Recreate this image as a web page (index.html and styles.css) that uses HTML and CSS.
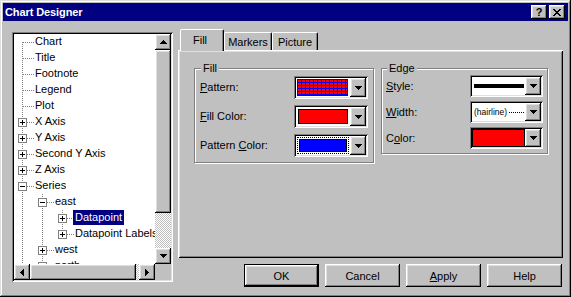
FILE: index.html
```html
<!DOCTYPE html>
<html>
<head>
<meta charset="utf-8">
<link rel="stylesheet" href="styles.css">
</head>
<body>
<div class="window">
  <div class="titlebar">
    <span class="title">Chart Designer</span>
    <span class="tbtn raised"><span class="qmark">?</span></span>
    <span class="tbtn raised">
      <svg width="8" height="7" viewBox="0 0 8 7"><path d="M0 0h2v1H0z M6 0h2v1H6z M1 1h2v1H1z M5 1h2v1H5z M2 2h4v1H2z M3 3h2v1H3z M2 4h4v1H2z M1 5h2v1H1z M5 5h2v1H5z M0 6h2v1H0z M6 6h2v1H6z" fill="#000"/></svg>
    </span>
  </div>
  <div class="body">
    <div class="tree">
      <div class="tree-view">
        <div class="row"><span class="cell first"></span><span class="label">Chart</span></div>
        <div class="row"><span class="cell tee"></span><span class="label">Title</span></div>
        <div class="row"><span class="cell tee"></span><span class="label">Footnote</span></div>
        <div class="row"><span class="cell tee"></span><span class="label">Legend</span></div>
        <div class="row"><span class="cell tee"></span><span class="label">Plot</span></div>
        <div class="row"><span class="cell tee"><span class="box plus"></span></span><span class="label">X Axis</span></div>
        <div class="row"><span class="cell tee"><span class="box plus"></span></span><span class="label">Y Axis</span></div>
        <div class="row"><span class="cell tee"><span class="box plus"></span></span><span class="label">Second Y Axis</span></div>
        <div class="row"><span class="cell tee"><span class="box plus"></span></span><span class="label">Z Axis</span></div>
        <div class="row"><span class="cell tee"><span class="box minus"></span></span><span class="label">Series</span></div>
        <div class="row"><span class="cell line"></span><span class="cell tee"><span class="box minus"></span></span><span class="label">east</span></div>
        <div class="row"><span class="cell line"></span><span class="cell line"></span><span class="cell tee"><span class="box plus"></span></span><span class="label sel">Datapoint</span></div>
        <div class="row"><span class="cell line"></span><span class="cell line"></span><span class="cell elbow"><span class="box plus"></span></span><span class="label">Datapoint Labels</span></div>
        <div class="row"><span class="cell line"></span><span class="cell tee"><span class="box plus"></span></span><span class="label">west</span></div>
        <div class="row"><span class="cell line"></span><span class="cell tee"><span class="box plus"></span></span><span class="label">north</span></div>
      </div>
      <div class="vscroll">
        <span class="sbtn raised"><svg width="7" height="4" viewBox="0 0 7 4"><path d="M3 0h1v1H3z M2 1h3v1H2z M1 2h5v1H1z M0 3h7v1H0z"/></svg></span>
        <span class="vthumb raised"></span>
        <span class="track"></span>
        <span class="sbtn raised"><svg width="7" height="4" viewBox="0 0 7 4"><path d="M0 0h7v1H0z M1 1h5v1H1z M2 2h3v1H2z M3 3h1v1H3z"/></svg></span>
      </div>
      <div class="hscroll">
        <span class="sbtn raised"><svg width="4" height="7" viewBox="0 0 4 7"><path d="M0 3h1v1H0z M1 2h1v3H1z M2 1h1v5H2z M3 0h1v7H3z"/></svg></span>
        <span class="hthumb raised"></span>
        <span class="track"></span>
        <span class="sbtn raised"><svg width="4" height="7" viewBox="0 0 4 7"><path d="M0 0h1v7H0z M1 1h1v5H1z M2 2h1v3H2z M3 3h1v1H3z"/></svg></span>
      </div>
      <div class="corner"></div>
    </div>

    <div class="right">
      <div class="tabs">
        <span class="tab active">Fill</span>
        <span class="tab t-markers">Markers</span>
        <span class="tab t-picture">Picture</span>
      </div>
      <div class="panel">
        <div class="group g-fill">
          <div class="legend">Fill</div>
          <div class="frow">
            <span class="flabel"><u>P</u>attern:</span>
            <span class="combo">
              <span class="field"><span class="swatch pattern"></span></span>
              <span class="drop raised"><svg width="7" height="4" viewBox="0 0 7 4"><path d="M0 0h7v1H0z M1 1h5v1H1z M2 2h3v1H2z M3 3h1v1H3z"/></svg></span>
            </span>
          </div>
          <div class="frow">
            <span class="flabel"><u>F</u>ill Color:</span>
            <span class="combo">
              <span class="field"><span class="swatch red"></span></span>
              <span class="drop raised"><svg width="7" height="4" viewBox="0 0 7 4"><path d="M0 0h7v1H0z M1 1h5v1H1z M2 2h3v1H2z M3 3h1v1H3z"/></svg></span>
            </span>
          </div>
          <div class="frow">
            <span class="flabel">Pattern <u>C</u>olor:</span>
            <span class="combo">
              <span class="field"><span class="focus"><span class="swatch blue"></span></span></span>
              <span class="drop raised"><svg width="7" height="4" viewBox="0 0 7 4"><path d="M0 0h7v1H0z M1 1h5v1H1z M2 2h3v1H2z M3 3h1v1H3z"/></svg></span>
            </span>
          </div>
        </div>
        <div class="group g-edge">
          <div class="legend">Edge</div>
          <div class="erow">
            <span class="flabel"><u>S</u>tyle:</span>
            <span class="combo ecombo">
              <span class="field style-field"><span class="thick"></span></span>
              <span class="drop raised"><svg width="7" height="4" viewBox="0 0 7 4"><path d="M0 0h7v1H0z M1 1h5v1H1z M2 2h3v1H2z M3 3h1v1H3z"/></svg></span>
            </span>
          </div>
          <div class="erow">
            <span class="flabel"><u>W</u>idth:</span>
            <span class="combo ecombo">
              <span class="field width-field"><span class="hair">(hairline)</span><span class="dots"></span></span>
              <span class="drop raised"><svg width="7" height="4" viewBox="0 0 7 4"><path d="M0 0h7v1H0z M1 1h5v1H1z M2 2h3v1H2z M3 3h1v1H3z"/></svg></span>
            </span>
          </div>
          <div class="erow">
            <span class="flabel">C<u>o</u>lor:</span>
            <span class="combo ecombo">
              <span class="field color-field"><span class="swatch red full"></span></span>
              <span class="drop raised"><svg width="7" height="4" viewBox="0 0 7 4"><path d="M0 0h7v1H0z M1 1h5v1H1z M2 2h3v1H2z M3 3h1v1H3z"/></svg></span>
            </span>
          </div>
        </div>
      </div>
      <div class="buttons">
        <span class="btn default">OK</span>
        <span class="btn raised">Cancel</span>
        <span class="btn raised"><u>A</u>pply</span>
        <span class="btn raised">Help</span>
      </div>
    </div>
  </div>
</div>
</body>
</html>
```

FILE: styles.css
```css
* { box-sizing: border-box; }
html, body { margin: 0; padding: 0; }
body {
  width: 571px;
  height: 297px;
  overflow: hidden;
  background: #c0c0c0;
  font-family: "Liberation Sans", Arial, sans-serif;
  font-size: 11px;
  color: #000;
}
u { text-decoration: underline; text-underline-offset: 1px; }

.raised {
  background: #c0c0c0;
  box-shadow: inset -1px -1px #000, inset 1px 1px #fff, inset -2px -2px #808080, inset 2px 2px #dfdfdf;
}

.window {
  width: 571px;
  height: 297px;
  padding: 3px;
  background: #c0c0c0;
  box-shadow: inset -1px -1px #000, inset 1px 1px #dfdfdf, inset -2px -2px #808080, inset 2px 2px #fff;
  display: flex;
  flex-direction: column;
}

/* title bar */
.titlebar {
  height: 18px;
  flex: none;
  background: #000080;
  display: flex;
  align-items: center;
  padding: 0 3px 0 2px;
}
.title {
  flex: 1;
  color: #fff;
  font-weight: bold;
  font-size: 11px;
  letter-spacing: -0.1px;
}
.tbtn {
  width: 16px;
  height: 14px;
  display: flex;
  align-items: center;
  justify-content: center;
}
.tbtn + .tbtn { margin-left: 2px; }
.qmark { font-weight: bold; font-size: 11px; line-height: 11px; margin-top: 0; }

/* body */
.body {
  flex: 1;
  display: flex;
  align-items: flex-start;
  padding: 8px 0 0 9px;
}

/* tree */
.tree {
  width: 161px;
  height: 250px;
  margin-top: 3px;
  padding: 2px;
  background: #c0c0c0;
  box-shadow: inset 1px 1px #808080, inset -1px -1px #fff, inset 2px 2px #000, inset -2px -2px #dfdfdf;
  display: grid;
  grid-template-columns: 141px 16px;
  grid-template-rows: 230px 16px;
}
.tree-view {
  background: #fff;
  overflow: hidden;
  white-space: nowrap;
}
.row {
  height: 16px;
  display: flex;
  align-items: flex-start;
}
.cell {
  width: 20px;
  height: 16px;
  flex: none;
  display: flex;
  align-items: flex-start;
}
.cell.line {
  background: repeating-linear-gradient(#808080 0 1px, transparent 1px 2px) 8px 0 / 1px 16px no-repeat;
}
.cell.tee {
  background:
    repeating-linear-gradient(90deg, #808080 0 1px, transparent 1px 2px) 9px 8px / 11px 1px no-repeat,
    repeating-linear-gradient(#808080 0 1px, transparent 1px 2px) 8px 0 / 1px 16px no-repeat;
}
.cell.elbow {
  background:
    repeating-linear-gradient(90deg, #808080 0 1px, transparent 1px 2px) 9px 8px / 11px 1px no-repeat,
    repeating-linear-gradient(#808080 0 1px, transparent 1px 2px) 8px 0 / 1px 9px no-repeat;
}
.cell.first {
  background:
    repeating-linear-gradient(90deg, #808080 0 1px, transparent 1px 2px) 9px 8px / 11px 1px no-repeat,
    repeating-linear-gradient(#808080 0 1px, transparent 1px 2px) 8px 8px / 1px 8px no-repeat;
}
.box {
  width: 9px;
  height: 9px;
  margin: 4px 0 0 4px;
  border: 1px solid #808080;
}
.box.plus {
  background:
    linear-gradient(#000, #000) center / 5px 1px no-repeat,
    linear-gradient(#000, #000) center / 1px 5px no-repeat,
    #fff;
}
.box.minus {
  background:
    linear-gradient(#000, #000) center / 5px 1px no-repeat,
    #fff;
}
.label {
  margin-left: -1px;
  padding: 0 2px;
  height: 15px;
  line-height: 15px;
  font-size: 11px;
}
.label.sel {
  background: #000080;
  color: #fff;
}

.vscroll {
  display: flex;
  flex-direction: column;
}
.hscroll {
  display: flex;
}
.sbtn {
  width: 16px;
  height: 16px;
  flex: none;
  display: flex;
  align-items: center;
  justify-content: center;
}
.vthumb { height: 163px; flex: none; }
.hthumb { width: 106px; flex: none; }
.track {
  flex: 1;
  background: repeating-conic-gradient(#fff 0 25%, #c0c0c0 0 50%) 0 0 / 2px 2px;
}
.corner { background: #c0c0c0; }

/* right column */
.right {
  width: 385px;
  margin-left: 5px;
}
.tabs {
  height: 21px;
  display: flex;
  align-items: flex-end;
  padding-left: 2px;
}
.tab {
  height: 18px;
  display: flex;
  align-items: center;
  justify-content: center;
  border-top: 1px solid #fff;
  border-left: 1px solid #fff;
  border-right: 1px solid #000;
  border-radius: 2px 2px 0 0;
  box-shadow: inset -1px 0 #808080;
  background: #c0c0c0;
  padding-top: 1px;
}
.tab.active {
  width: 44px;
  height: 22px;
  margin-bottom: -1px;
  position: relative;
  z-index: 1;
  padding: 0 4px 1px 0;
}
.t-markers { width: 48px; }
.t-picture { width: 46px; }

.panel {
  height: 208px;
  padding: 18px 0 0 16px;
  display: flex;
  align-items: flex-start;
  background: #c0c0c0;
  box-shadow: inset 1px 1px #fff, inset -1px -1px #000, inset 2px 2px #dfdfdf, inset -2px -2px #808080;
}

.group {
  border: 1px solid #808080;
  box-shadow: inset 1px 1px #fff, 1px 1px #fff;
  display: flex;
  flex-direction: column;
}
.legend {
  margin: -7px 0 0 1px;
  padding: 0 2px;
  width: fit-content;
  height: 13px;
  line-height: 13px;
  background: #c0c0c0;
}
.g-fill {
  width: 180px;
  height: 95px;
  padding: 0 5px 5px 5px;
}
.g-edge {
  width: 167px;
  height: 86px;
  margin-left: 7px;
  padding: 0 4px 4px 4px;
}
.frow {
  height: 23px;
  margin-top: 6px;
  display: flex;
  align-items: center;
  justify-content: space-between;
}
.frow:nth-child(2) { margin-top: 1px; }
.erow {
  height: 22px;
  margin-top: 4px;
  display: flex;
  align-items: center;
  justify-content: space-between;
}
.erow:nth-child(2) { margin-top: 0; }
.flabel { line-height: 13px; }

.combo {
  width: 74px;
  height: 23px;
  padding: 2px;
  display: flex;
  background: #fff;
  box-shadow: inset 1px 1px #808080, inset -1px -1px #fff, inset 2px 2px #000, inset -2px -2px #dfdfdf;
}
.ecombo { width: 73px; height: 22px; }
.field {
  flex: 1;
  padding: 1px;
  display: flex;
  background: #fff;
}
.drop {
  width: 16px;
  flex: none;
  display: flex;
  align-items: center;
  justify-content: center;
}
.swatch { flex: 1; }
.swatch.pattern {
  margin: 0 1px 0 0;
  background:
    linear-gradient(90deg, #00f 1px, transparent 1px) 0 0 / 4px 3px,
    linear-gradient(#00f 1px, #f00 1px) 0 0 / 4px 3px;
  box-shadow: inset -1px -1px #00f;
}
.swatch.red { background: #f00; border: 1px solid #000; margin: 1px; }
.swatch.red.full { margin: 0; }
.swatch.blue { background: #00f; border: 1px solid #000; }
.focus {
  flex: 1;
  display: flex;
  border: 1px dotted #000;
  padding: 1px;
}
.style-field { align-items: center; padding: 0 1px 0 2px; }
.thick { flex: 1; height: 4px; background: #000; }
.width-field { align-items: center; padding: 0 1px 0 2px; }
.hair { font-size: 8.5px; line-height: 10px; }
.dots { flex: 1; height: 1px; border-top: 1px dotted #000; margin-left: 2px; margin-top: 1px; }
.color-field { padding: 0; }

.buttons {
  display: flex;
  justify-content: flex-end;
  gap: 6px;
  margin-top: 6px;
  padding-right: 1px;
}
.btn {
  width: 75px;
  height: 23px;
  display: flex;
  align-items: center;
  justify-content: center;
}
.btn.default {
  background: #c0c0c0;
  box-shadow: inset 0 0 0 1px #000, inset -2px -2px #000, inset 2px 2px #fff, inset -3px -3px #808080, inset 3px 3px #dfdfdf;
}
```
